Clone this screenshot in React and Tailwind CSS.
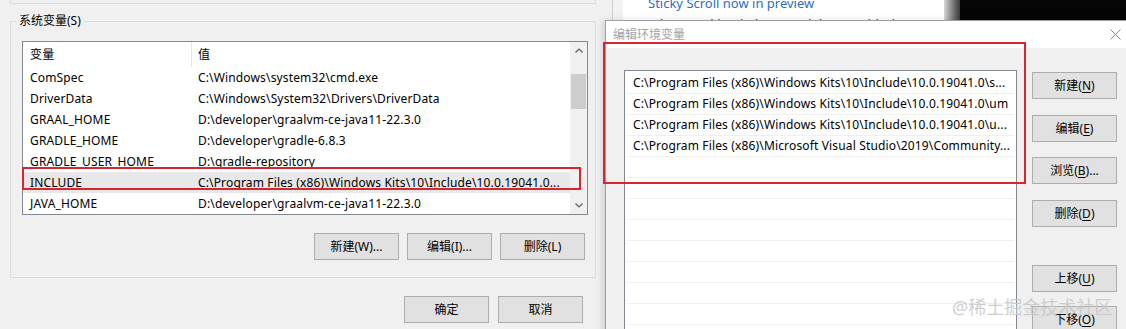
import React from 'react'

const sysVars = [
    ["ComSpec", "C:\\Windows\\system32\\cmd.exe"],
    ["DriverData", "C:\\Windows\\System32\\Drivers\\DriverData"],
    ["GRAAL_HOME", "D:\\developer\\graalvm-ce-java11-22.3.0"],
    ["GRADLE_HOME", "D:\\developer\\gradle-6.8.3"],
    ["GRADLE_USER_HOME", "D:\\gradle-repository"],
    ["INCLUDE", "C:\\Program Files (x86)\\Windows Kits\\10\\Include\\10.0.19041.0..."],
    ["JAVA_HOME", "D:\\developer\\graalvm-ce-java11-22.3.0"],
];

const paths = [
    "C:\\Program Files (x86)\\Windows Kits\\10\\Include\\10.0.19041.0\\s...",
    "C:\\Program Files (x86)\\Windows Kits\\10\\Include\\10.0.19041.0\\um",
    "C:\\Program Files (x86)\\Windows Kits\\10\\Include\\10.0.19041.0\\u...",
    "C:\\Program Files (x86)\\Microsoft Visual Studio\\2019\\Community...",
    "", "", "", "", "", "", "", "",
];

function WinButton({ children, className = "" }) {
    return (
        <div className={`flex h-[27px] w-[85px] shrink-0 items-center justify-center border border-[#adadad] bg-[#e1e1e1] text-[12px] leading-none text-black ${className}`}>
            {children}
        </div>
    );
}

// 带下划线的助记符
const Key = ({ k }) => <span className="underline underline-offset-2">{k}</span>;

function Chevron({ up }) {
    return (
        <svg width="8" height="5" viewBox="0 0 8 5">
            <path d={up ? "M0.5 4.5 L4 1 L7.5 4.5" : "M0.5 0.5 L4 4 L7.5 0.5"} fill="none" stroke="#606060" strokeWidth="1.2" />
        </svg>
    );
}

export default function App() {
    return (
        <div className="relative h-[329px] w-[1126px] overflow-hidden bg-[#f0f0f0] font-['Noto_Sans','Noto_Sans_CJK_SC',sans-serif] text-[12px] text-black">
            {/* 左侧：环境变量窗口 */}
            <div className="absolute left-0 top-0 h-[329px] w-[612px] bg-[#f0f0f0]">
                <div className="ml-[10px] h-[4px] w-[586px] border-x border-b border-[#dcdcdc]" />
                <div className="relative ml-[10px] mt-[17px] h-[257px] w-[586px] border border-[#dcdcdc] pl-[11px] pt-[19px]">
                    <span className="absolute left-[5px] top-[-10px] bg-[#f0f0f0] px-[3px] leading-[18px]">系统变量(S)</span>

                    <div className="flex h-[174px] w-[566px] border border-[#828790] bg-white tracking-[0.15px]">
                        <div className="flex-1">
                            <div className="flex h-[25px] items-center">
                                <div className="flex h-full w-[169px] items-center border-r border-[#e5e5e5] pl-[7px]">变量</div>
                                <div className="pl-[6px]">值</div>
                            </div>
                            {sysVars.map(([name, value]) => (
                                <div
                                    key={name}
                                    className={`flex h-[21px] items-center whitespace-nowrap ${name === "INCLUDE" ? "bg-[#e8e8e8]" : ""}`}
                                >
                                    <div className="w-[169px] pl-[7px]">{name}</div>
                                    <div className="pl-[6px]">{value}</div>
                                </div>
                            ))}
                        </div>
                        <div className="flex w-[17px] flex-col bg-[#f0f0f0]">
                            <div className="flex h-[17px] items-center justify-center"><Chevron up /></div>
                            <div className="mx-[1px] mt-[15px] h-[35px] bg-[#cdcdcd]" />
                            <div className="flex-1" />
                            <div className="flex h-[17px] items-center justify-center"><Chevron /></div>
                        </div>
                    </div>

                    <div className="mt-[18px] flex w-[566px] justify-end gap-[8px] pr-[3px]">
                        <WinButton>新建(W)...</WinButton>
                        <WinButton>编辑(I)...</WinButton>
                        <WinButton>删除(L)</WinButton>
                    </div>
                </div>

                <div className="mt-[18px] flex w-[583px] justify-end gap-[9px]">
                    <WinButton>确定</WinButton>
                    <WinButton>取消</WinButton>
                </div>
            </div>

            {/* 背后的窗口 */}
            <div className="absolute left-[612px] top-0 flex h-[20px] w-[514px]">
                <div className="w-[11px] border-l border-[#cfcfcf] bg-[#f2f2f2]" />
                <div className="relative w-[321px] overflow-hidden bg-white">
                    <div className="absolute left-[25px] top-[-5px] whitespace-nowrap text-[13px] leading-[16px] text-[#2a6fc4]">Sticky Scroll now in preview</div>
                    <div className="absolute left-[25px] top-[16px] whitespace-nowrap text-[13px] leading-[16px] text-[#333]">When working in large codebases with deep nesting</div>
                </div>
                <div className="w-[16px] bg-gradient-to-r from-[#d8d8d8] to-[#3a3a3a]" />
                <div className="flex-1 bg-[#050505]" />
            </div>

            {/* 编辑环境变量 对话框 */}
            <div className="absolute left-[605px] top-[20px] h-[320px] w-[522px] border border-[#a0a0a0] bg-[#f0f0f0] shadow-[-3px_0_6px_rgba(0,0,0,0.12)]">
                <div className="flex h-[27px] items-center justify-between bg-white pl-[7px] pr-[5px]">
                    <span className="text-[#a3a3a3]">编辑环境变量</span>
                    <svg width="11" height="11" viewBox="0 0 11 11">
                        <path d="M0.5 0.5 L10.5 10.5 M10.5 0.5 L0.5 10.5" stroke="#8a8a8a" strokeWidth="1" />
                    </svg>
                </div>
                <div className="flex pl-[18px] pt-[22px]">
                    <div className="h-[270px] w-[393px] border border-[#828790] bg-white pt-[2px] tracking-[0.15px]">
                        {paths.map((p, i) => (
                            <div key={i} className="mx-[2px] flex h-[21px] items-center whitespace-nowrap border-b border-[#efefef] pl-[6px]">
                                {p}
                            </div>
                        ))}
                    </div>
                    <div className="ml-[15px] flex flex-col">
                        <WinButton className="mt-[2px]">新建(<Key k="N" />)</WinButton>
                        <WinButton className="mt-[16px]">编辑(<Key k="E" />)</WinButton>
                        <WinButton className="mt-[15px]">浏览(<Key k="B" />)...</WinButton>
                        <WinButton className="mt-[16px]">删除(<Key k="D" />)</WinButton>
                        <WinButton className="mt-[38px]">上移(<Key k="U" />)</WinButton>
                        <WinButton className="mt-[14px]">下移(<Key k="O" />)</WinButton>
                    </div>
                </div>
            </div>

            {/* 标注红框 */}
            <div className="absolute left-[22px] top-[167px] h-[23px] w-[559px] border-2 border-[#d8262e]" />
            <div className="absolute left-[603px] top-[42px] h-[142px] w-[423px] border-2 border-[#d8262e]" />

            {/* 水印 */}
            <div className="absolute left-[952px] top-[296px] whitespace-nowrap text-[18px] leading-[22px] text-[#c8c8c8]/90">@稀土掘金技术社区</div>
        </div>
    )
}
